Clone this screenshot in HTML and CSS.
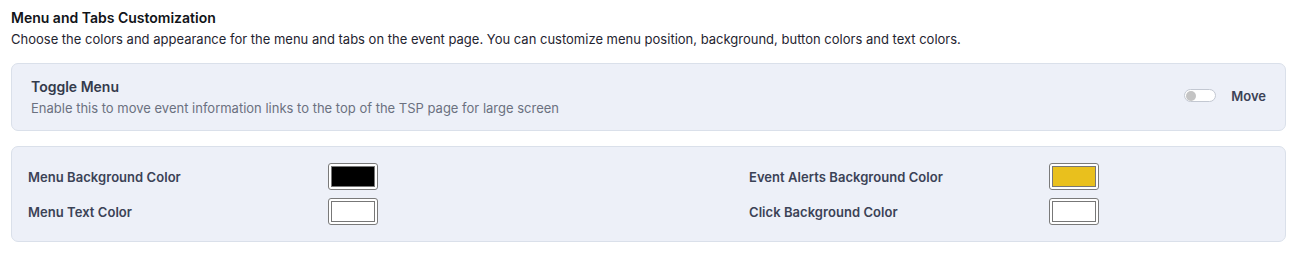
FILE: index.html
```html
<!DOCTYPE html>
<html lang="en">

<head>
  <meta charset="UTF-8">
  <meta name="viewport" content="width=device-width, initial-scale=1.0">
  <title>Menu and Tabs Customization</title>
  <link rel="stylesheet" href="styles.css">
</head>

<body>

  <div class="section">
    <h3 class="section-title">Menu and Tabs Customization</h3>
    <p class="section-desc">Choose the colors and appearance for the menu and tabs on the event page. You can customize menu position, background, button colors and text colors.</p>

    <div class="card toggle-card">
      <div class="toggle-text">
        <h4>Toggle Menu</h4>
        <p>Enable this to move event information links to the top of the TSP page for large screen</p>
      </div>
      <label class="switch-wrap">
        <span class="switch"><span class="knob"></span></span>
        <span class="switch-label">Move</span>
      </label>
    </div>

    <div class="card color-card">
      <label class="color-label" for="menuBg">Menu Background Color</label>
      <input type="color" id="menuBg" value="#000000">
      <label class="color-label" for="alertBg">Event Alerts Background Color</label>
      <input type="color" id="alertBg" value="#e9c01d">

      <label class="color-label" for="menuText">Menu Text Color</label>
      <input type="color" id="menuText" value="#ffffff">
      <label class="color-label" for="clickBg">Click Background Color</label>
      <input type="color" id="clickBg" value="#ffffff">
    </div>
  </div>

</body>

</html>
```

FILE: styles.css
```css
body {
  font-family: Inter, "Noto Sans", sans-serif;
  background-color: #ffffff;
  margin: 0;
  padding: 0;
  color: #1f2430;
}

.section {
  padding: 9px 12px 0 11px;
}

.section-title {
  margin: 0;
  font-size: 14px;
  font-weight: 600;
  line-height: 18px;
  color: #111318;
}

.section-desc {
  margin: 3px 0 0;
  font-size: 13px;
  line-height: 18px;
  color: #1f2430;
}

.card {
  background-color: #edf0f8;
  border: 1px solid #dae0ea;
  border-radius: 7px;
}

.toggle-card {
  display: flex;
  align-items: center;
  justify-content: space-between;
  margin-top: 15px;
  padding: 13px 19px 13px 19px;
}

.toggle-text h4 {
  margin: 0;
  font-size: 14px;
  font-weight: 600;
  line-height: 20px;
  color: #343b4c;
}

.toggle-text p {
  margin: 2px 0 0;
  font-size: 13px;
  line-height: 18px;
  color: #6b7180;
}

.switch-wrap {
  display: flex;
  align-items: center;
  gap: 15px;
  margin-bottom: 3px;
}

.switch {
  display: inline-flex;
  align-items: center;
  width: 28px;
  height: 11px;
  border: 1px solid #c3c8d2;
  border-radius: 8px;
  background-color: #ffffff;
  padding: 0 1px;
}

.knob {
  width: 10px;
  height: 10px;
  border-radius: 50%;
  background-color: #c4c4c4;
}

.switch-label {
  font-size: 13px;
  font-weight: 600;
  color: #3b4256;
}

.color-card {
  display: grid;
  grid-template-columns: 300px 421px 300px 1fr;
  align-items: center;
  row-gap: 8px;
  margin-top: 15px;
  padding: 16px 16px 16px 16px;
}

.color-label {
  font-size: 13px;
  font-weight: 600;
  color: #3b4256;
  letter-spacing: 0.05px;
}

input[type="color"] {
  width: 50px;
  height: 27px;
  margin: 0;
  padding: 2px;
  border: 1px solid #7a7a7a;
  border-radius: 3px;
  background-color: #ffffff;
  box-sizing: border-box;
}

input[type="color"]::-webkit-color-swatch-wrapper {
  padding: 0;
}

input[type="color"]::-webkit-color-swatch {
  border: 1px solid #777777;
  border-radius: 0;
}
```
